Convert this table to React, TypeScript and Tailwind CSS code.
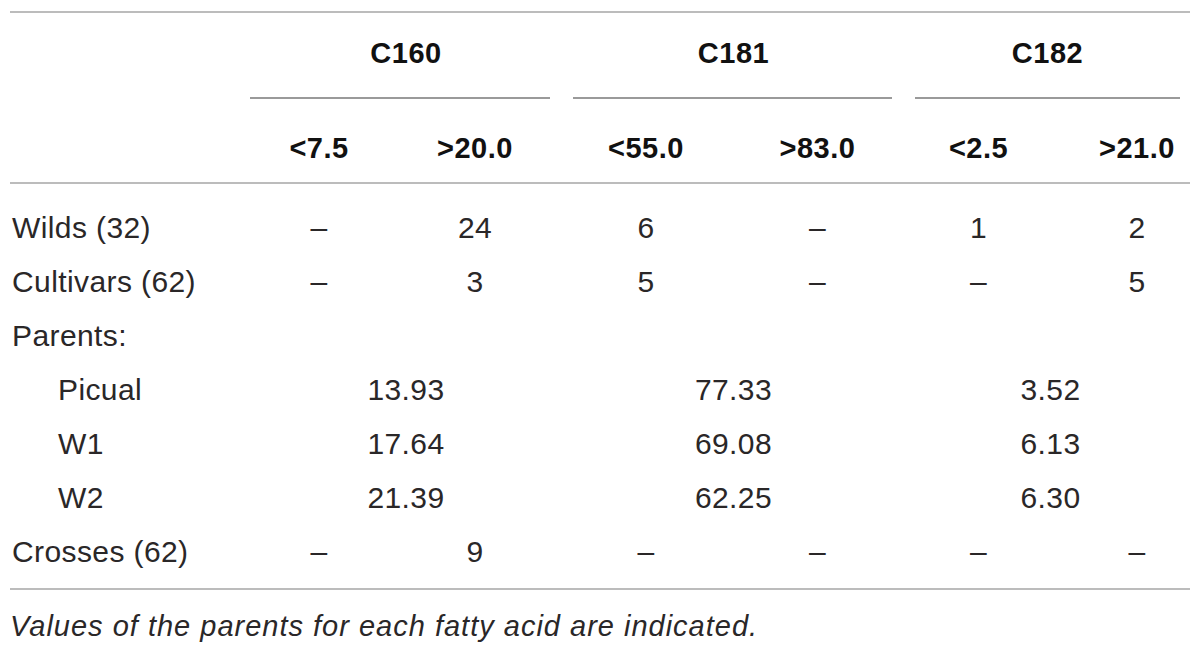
const groups = [
  { name: "C160", line: "ml-0 mr-3" },
  { name: "C181", line: "ml-[11px] mr-[13px]" },
  { name: "C182", line: "ml-[10px] mr-[10px]" },
];

const subHeads = ["<7.5", ">20.0", "<55.0", ">83.0", "<2.5", ">21.0"];

const countRows = [
  { label: "Wilds (32)", values: ["–", "24", "6", "–", "1", "2"] },
  { label: "Cultivars (62)", values: ["–", "3", "5", "–", "–", "5"] },
];

const parents = [
  { label: "Picual", values: ["13.93", "77.33", "3.52"] },
  { label: "W1", values: ["17.64", "69.08", "6.13"] },
  { label: "W2", values: ["21.39", "62.25", "6.30"] },
];

const crosses = { label: "Crosses (62)", values: ["–", "9", "–", "–", "–", "–"] };

// column template shared by every row
const cols = "grid grid-cols-[240px_138px_174px_168px_175px_155px_130px]";
// where each of the six value cells puts its text
const cellPad = ["", "", "", "", "pr-[8px]", "pl-[24px]"];

function CountRow({ label, values }: { label: string; values: string[] }) {
  return (
    <div className={`${cols} h-[54px] items-center`}>
      <div className="pl-[2px]">{label}</div>
      {values.map((v, i) => (
        <div key={i} className={`text-center ${cellPad[i]}`}>
          {v}
        </div>
      ))}
    </div>
  );
}

export default function App() {
  return (
    <div
      className="w-[1200px] h-[655px] bg-white text-[#2a2728] pt-[11px]"
      style={{ fontFamily: '"Liberation Sans", Arial, sans-serif' }}
    >
      <div className="mx-[10px] border-t-2 border-[#bcbcbc]">
        {/* header: fatty acids */}
        <div className={`${cols} h-[86px] font-bold text-[#111]`}>
          <div />
          {groups.map((g) => (
            <div key={g.name} className="col-span-2 flex flex-col">
              <div className="flex-1 flex items-center justify-center text-[29px] tracking-[0.5px] pb-[2px]">
                {g.name}
              </div>
              <div className={`h-[2px] bg-[#9a9a9a] ${g.line}`} />
            </div>
          ))}
        </div>

        {/* header: thresholds */}
        <div className={`${cols} h-[85px] items-center font-bold text-[#111] text-[29px] tracking-[0.5px] border-b-2 border-[#bcbcbc]`}>
          <div />
          {subHeads.map((h, i) => (
            <div key={i} className={`text-center pt-[16px] ${cellPad[i]}`}>
              {h}
            </div>
          ))}
        </div>

        {/* body */}
        <div className="pt-[16px] pb-[10px] text-[30px] tracking-[0.4px] border-b-2 border-[#bcbcbc]">
          {countRows.map((r) => (
            <CountRow key={r.label} label={r.label} values={r.values} />
          ))}
          <div className={`${cols} h-[54px] items-center`}>
            <div className="pl-[2px]">Parents:</div>
          </div>
          {parents.map((p) => (
            <div key={p.label} className={`${cols} h-[54px] items-center`}>
              <div className="pl-[48px]">{p.label}</div>
              <div className="col-span-2 text-center">{p.values[0]}</div>
              <div className="col-span-2 text-center">{p.values[1]}</div>
              <div className="col-span-2 text-center pl-[6px]">{p.values[2]}</div>
            </div>
          ))}
          <CountRow label={crosses.label} values={crosses.values} />
        </div>

        <p className="italic text-[29px] tracking-[1px] pt-[15px]">
          Values of the parents for each fatty acid are indicated.
        </p>
      </div>
    </div>
  );
}
